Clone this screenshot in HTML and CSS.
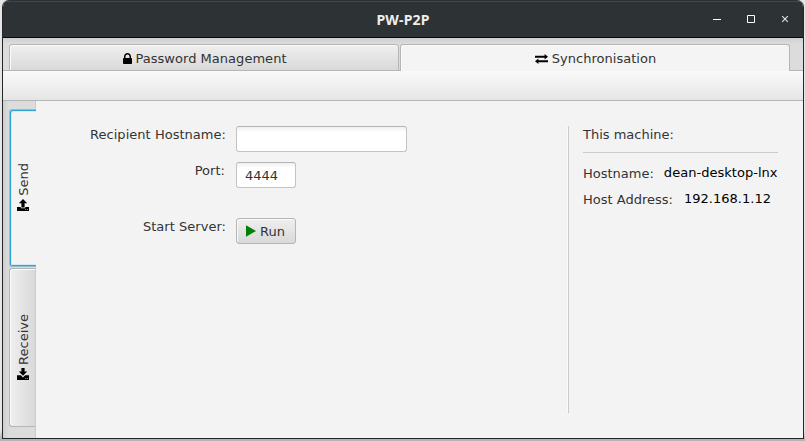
FILE: index.html
```html
<!DOCTYPE html>
<html lang="en">
<head>
<meta charset="utf-8">
<title>PW-P2P</title>
<link rel="stylesheet" href="styles.css">
</head>
<body>
<div class="window">
  <header class="titlebar">
    <h1 class="title">PW-P2P</h1>
    <div class="controls">
      <svg width="10" height="10" viewBox="0 0 10 10"><path d="M1 5.5h8" stroke="#fff"/></svg>
      <svg width="10" height="10" viewBox="0 0 10 10"><path d="M1.5 1.5h7v7h-7z" fill="none" stroke="#fff"/></svg>
      <svg width="10" height="10" viewBox="0 0 10 10"><path d="M2.2 2.2l5.6 5.6M7.8 2.2l-5.6 5.6" stroke="#ddd" stroke-width="1.2"/></svg>
    </div>
  </header>
  <nav class="tabs">
    <div class="tab">
      <svg class="lock" width="9" height="11" viewBox="320 128 1152 1408" preserveAspectRatio="none"><path d="M640 768h512V576q0-106-75-181t-181-75-181 75-75 181v192zm832 96v576q0 40-28 68t-68 28H416q-40 0-68-28t-28-68V864q0-40 28-68t68-28h32V576q0-184 132-316t316-132 316 132 132 316v192h32q40 0 68 28t28 68z"/></svg>
      <span>Password Management</span>
    </div>
    <div class="tab selected">
      <svg class="swap" width="13" height="10" viewBox="0 0 13 10"><path d="M0 1.8h9.6V0L13 2.8 9.6 5.6V3.8H0zM13 6.2H3.4V4.4L0 7.2 3.4 10V8.2H13z"/></svg>
      <span>Synchronisation</span>
    </div>
  </nav>
  <div class="toolbar"></div>
  <main class="main">
    <nav class="side">
      <div class="side-tab focused">
        <span>Send</span>
        <svg width="12" height="12" viewBox="0 0 12 12"><path d="M6 0l4.2 4.2H7.6v4.2H4.4V4.2H1.8zM0 8h3.8v1.2h4.4V8H12v4H0z"/><path d="M8.2 10h1v1h-1zM10 10h1v1h-1z" fill="#888"/></svg>
      </div>
      <div class="side-tab">
        <span>Receive</span>
        <svg width="12" height="12" viewBox="0 0 12 12"><path d="M4.4 0h3.2v3.6h2.6L6 7.8 1.8 3.6h2.6zM0 7.2h3.8L6 9.4l2.2-2.2H12V12H0z"/><path d="M8.2 10h1v1h-1zM10 10h1v1h-1z" fill="#888"/></svg>
      </div>
    </nav>
    <section class="content">
      <form class="form">
        <label for="recipient">Recipient Hostname:</label>
        <input id="recipient" class="field" type="text">
        <label for="port" class="port">Port:</label>
        <input id="port" class="field short" type="text" value="4444">
        <span class="start">Start Server:</span>
        <button class="run start" type="button"><svg width="10" height="12" viewBox="0 0 10 12"><path d="M0 .3L10 6 0 11.7z" fill="#008000"/></svg>Run</button>
      </form>
      <aside class="machine">
        <h2>This machine:</h2>
        <div class="row"><span>Hostname:</span><span class="value">dean-desktop-lnx</span></div>
        <div class="row address"><span>Host Address:</span><span class="value">192.168.1.12</span></div>
      </aside>
    </section>
  </main>
</div>
</body>
</html>
```
FILE: styles.css
```css
* { box-sizing: border-box; }
body {
  margin: 0;
  padding: 0 1px 2px 2px;
  height: 441px;
  overflow: hidden;
  background: linear-gradient(#e6e6e6 0 430px, #b4b4b4 439px);
  font: 13px/15px "DejaVu Sans", sans-serif;
  color: #333;
}
svg { display: block; flex: none; }
.window {
  height: 439px;
  display: flex;
  flex-direction: column;
  border: 1px solid #242628;
  border-top: 0;
  border-radius: 7px 7px 0 0;
  overflow: hidden;
  background: #f3f3f3;
}
.titlebar {
  flex: 0 0 38px;
  display: grid;
  grid-template-columns: 1fr auto 1fr;
  background: linear-gradient(#2b3032 0 1px, #42484a 1px 2px, #2d3335 2px);
  border-bottom: 1px solid #080a0a;
  margin: 0 -1px;
}
.title {
  grid-column: 2;
  margin: 11px 0 0;
  font: bold 14px/18px "Noto Sans", sans-serif;
  letter-spacing: 0.15px;
  color: #eee;
}
.controls {
  display: flex;
  justify-content: flex-end;
  gap: 24px;
  padding: 14px 14px 0 0;
}
.tabs {
  flex: 0 0 33px;
  display: flex;
  gap: 1px;
  padding: 6px 0 0 6px;
  background: linear-gradient(to top, #b5b5b5 1px, transparent 1px), linear-gradient(#cfcfcf, #dcdcdc 6px);
}
.tab {
  width: 390px;
  display: flex;
  justify-content: center;
  padding: 6px 0 0 2px;
  border: 1px solid #b5b5b5;
  border-radius: 3px 3px 0 0;
  background: linear-gradient(#efefef, #d9d9d9);
  box-shadow: inset 1px 1px #fafafa;
  letter-spacing: 0.03px;
}
.tab.selected {
  padding-left: 1px;
  border-bottom: 0;
  background: #f4f4f4;
}
.lock { margin: 2px 3px 0 0; }
.swap { margin: 3px 4px 0 0; }
.toolbar {
  flex: 0 0 30px;
  background: linear-gradient(#fafafa, #e5e5e5);
  border-bottom: 1px solid #b5b5b5;
}
.main { flex: 1; display: flex; min-height: 0; }
.side {
  width: 33px;
  padding: 8px 0 0 6px;
  display: flex;
  flex-direction: column;
  gap: 1px;
  background: linear-gradient(to right, #cfcfcf, #dcdcdc 6px);
  border-right: 1px solid #cbcbcb;
}
.side-tab {
  height: 159px;
  display: flex;
  flex-direction: column;
  align-items: center;
  justify-content: center;
  gap: 4px;
  padding: 0 0 1px 1px;
  border: 1px solid #b5b5b5;
  border-right: 0;
  border-radius: 3px 0 0 3px;
  background: linear-gradient(to right, #efefef, #d9d9d9);
  box-shadow: inset 1px 1px #fafafa;
}
.side-tab span { writing-mode: vertical-rl; transform: rotate(180deg); }
.side-tab svg { margin-right: 1px; fill: #000; }
.side-tab.focused {
  height: 158px;
  margin-right: -1px;
  padding-bottom: 2px;
  border-color: #8fbfd2;
  background: #f3f3f3;
  box-shadow: inset 1px 1px #2fa5d3, inset 0 -1px #2fa5d3, inset 2px 2px #d3eaf2, inset 0 -2px #d3eaf2;
}
.content { flex: 1; display: flex; padding: 25px 25px 25px 54px; }
.form {
  display: grid;
  grid-template-columns: 136px 171px;
  grid-template-rows: 26px 26px 46px;
  column-gap: 10px;
  row-gap: 10px;
  align-content: start;
}
.form label, .form span {
  justify-self: end;
  padding-top: 1px;
  letter-spacing: 0.03px;
  white-space: nowrap;
}
.form .port { padding-right: 1px; }
.form .start { margin-top: 20px; }
.field {
  width: 171px;
  height: 26px;
  padding: 0 8px;
  border: 1px solid #c3c3c3;
  border-top-color: #b5b5b5;
  border-radius: 3px;
  background: linear-gradient(#f0f0f0, #fff 5px);
  font: inherit;
  color: inherit;
}
.short { width: 60px; }
.run {
  width: 60px;
  height: 26px;
  display: flex;
  align-items: center;
  gap: 4px;
  padding: 0 8px 0 9px;
  border: 1px solid #b5b5b5;
  border-radius: 3px;
  background: linear-gradient(#efefef, #d9d9d9);
  box-shadow: inset 1px 1px #fafafa;
  font: inherit;
  color: inherit;
}
.machine {
  width: 210px;
  margin-left: auto;
  padding: 1px 0 0 14px;
  border-left: 1px solid #cbcbcb;
  box-shadow: -1px 0 #fafafa;
}
.machine h2 {
  margin: 0 0 13px;
  padding-bottom: 10px;
  border-bottom: 1px solid #cbcbcb;
  font: inherit;
}
.row { display: flex; gap: 10px; height: 26px; white-space: nowrap; }
.address { gap: 11px; }
.value { color: #000; margin-top: -1px; letter-spacing: 0.03px; }
```
